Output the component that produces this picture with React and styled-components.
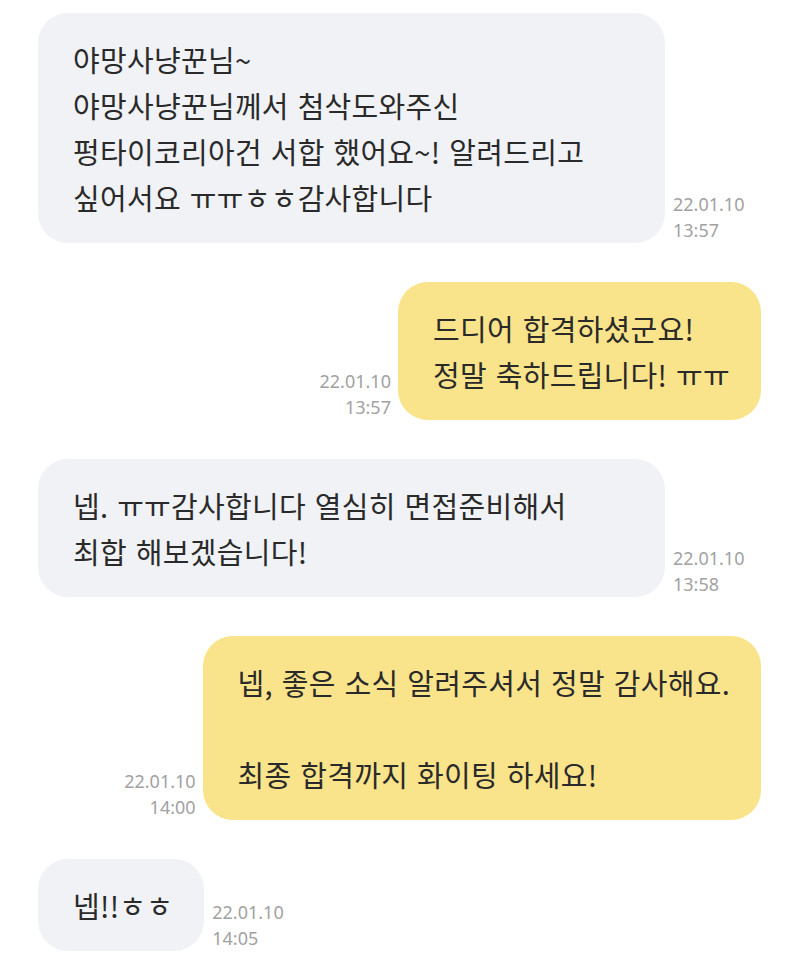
import React from "react";
import styled, { createGlobalStyle } from "styled-components";

const GlobalStyle = createGlobalStyle`
  html, body {
    margin: 0;
    padding: 0;
    background: #ffffff;
  }
  body {
    font-family: "Noto Sans CJK KR", "Noto Sans", sans-serif;
    color: #2b2b2b;
  }
`;

const Chat = styled.div`
  display: flex;
  flex-direction: column;
  gap: 39px;
  padding: 13px 39px 12px 38px;
  width: 800px;
  box-sizing: border-box;
`;

const Row = styled.div`
  display: flex;
  align-items: flex-end;
  gap: 7px;
  flex-direction: ${(props) => (props.mine ? "row-reverse" : "row")};
`;

const Bubble = styled.div`
  box-sizing: border-box;
  width: ${(props) => (props.wide ? "627px" : "auto")};
  padding: 23px 31px 23px 35px;
  border-radius: 30px;
  background: ${(props) => (props.mine ? "#fae48b" : "#f0f2f5")};
  font-size: 29px;
  line-height: 46px;
  letter-spacing: 0.3px;
  word-spacing: 2px;
  white-space: pre-line;
  color: #2a2a2a;
`;

const Time = styled.div`
  font-family: "Noto Sans", "Liberation Sans", sans-serif;
  font-size: 18px;
  line-height: 26px;
  color: #a2a2a2;
  text-align: ${(props) => (props.mine ? "right" : "left")};
  margin-left: ${(props) => (props.mine ? "0" : "1px")};
`;

const messages = [
  {
    mine: false,
    wide: true,
    text: "야망사냥꾼님~\n야망사냥꾼님께서 첨삭도와주신\n펑타이코리아건 서합 했어요~! 알려드리고\n싶어서요 ㅠㅠㅎㅎ감사합니다",
    date: "22.01.10",
    time: "13:57",
  },
  {
    mine: true,
    text: "드디어 합격하셨군요!\n정말 축하드립니다! ㅠㅠ",
    date: "22.01.10",
    time: "13:57",
  },
  {
    mine: false,
    wide: true,
    text: "넵. ㅠㅠ감사합니다 열심히 면접준비해서\n최합 해보겠습니다!",
    date: "22.01.10",
    time: "13:58",
  },
  {
    mine: true,
    text: "넵, 좋은 소식 알려주셔서 정말 감사해요.\n\n최종 합격까지 화이팅 하세요!",
    date: "22.01.10",
    time: "14:00",
  },
  {
    mine: false,
    text: "넵!!ㅎㅎ",
    date: "22.01.10",
    time: "14:05",
  },
];

const App = () => {
  return (
    <>
      <GlobalStyle />
      <Chat>
        {messages.map((m, i) => (
          <Row key={i} mine={m.mine}>
            <Bubble mine={m.mine} wide={m.wide}>
              {m.text}
            </Bubble>
            <Time mine={m.mine}>
              {m.date}
              <br />
              {m.time}
            </Time>
          </Row>
        ))}
      </Chat>
    </>
  );
};

export default App;
